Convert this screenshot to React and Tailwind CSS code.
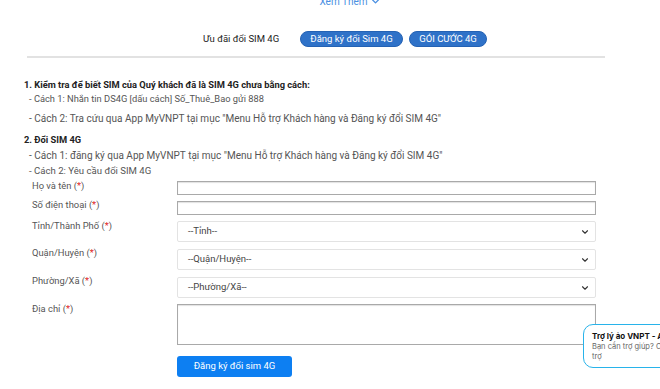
import { ChevronDown } from 'lucide-react'

const Req = () => <span>(<span className="text-[#e02424]">*</span>)</span>

const Row = ({ label, children, className = '', labelClass = '' }) => (
  <div className={`flex items-start pl-[32px] ${className}`}>
    <div className={`w-[145px] text-[9.4px] leading-[14px] text-[#555] ${labelClass}`}>
      {label} <Req />
    </div>
    <div className="w-[419px]">{children}</div>
  </div>
)

const TextInput = () => (
  <div className="h-[14px] border border-[#a9a9a9] shadow-[inset_0_1px_1px_rgba(0,0,0,0.12)] bg-white" />
)

const Select = ({ placeholder }) => (
  <div className="h-[21px] flex items-center justify-between pl-[10px] pr-[5px] border border-[#e3e3e3] rounded-[2px] bg-white text-[9.5px] text-[#444]">
    <span>{placeholder}</span>
    <ChevronDown size={10} strokeWidth={2.6} className="text-[#333]" />
  </div>
)

export default function App() {
  return (
    <div className="relative w-[660px] h-[389px] overflow-hidden bg-white font-['Roboto',sans-serif] text-[#333]">
      <div className="flex justify-center h-[8px]">
        <div className="-mt-[5px] flex items-center gap-[2px] text-[10px] leading-[12px] text-[#4a90e2] pl-[40px]">
          Xem Thêm <ChevronDown size={11} strokeWidth={3} />
        </div>
      </div>

      <div className="mt-[23px] flex items-center pl-[203px] h-[16px]">
        <span className="text-[9.5px] text-[#222] w-[97px]">Ưu đãi đổi SIM 4G</span>
        <span className="h-[16px] w-[103px] flex items-center justify-center rounded-full bg-[#2f72c8] border border-[#2462b4] text-white text-[9.5px]">
          Đăng ký đổi Sim 4G
        </span>
        <span className="ml-[6px] h-[16px] w-[78px] flex items-center justify-center rounded-full bg-[#2f72c8] border border-[#2462b4] text-white text-[9.5px]">
          GÓI CƯỚC 4G
        </span>
      </div>

      <div className="mt-[9px] ml-[27px] w-[578px] h-[2px] bg-[#e2e2e2]" />

      <div className="pl-[24px] mt-[20px] text-[9.6px]">
        <div className="font-bold text-[9.3px] leading-[14px] text-[#222]">
          1. Kiểm tra để biết SIM của Quý khách đã là SIM 4G chưa bằng cách:
        </div>
        <div className="pl-[5px] text-[9.3px] leading-[14px] text-[#555]">- Cách 1: Nhắn tin DS4G [dấu cách] Số_Thuê_Bao gửi 888</div>
        <div className="pl-[5px] mt-[6px] text-[10px] leading-[14px] text-[#555]">
          - Cách 2: Tra cứu qua App MyVNPT tại mục "Menu Hỗ trợ Khách hàng và Đăng ký đổi SIM 4G"
        </div>
        <div className="mt-[7px] font-bold text-[9.3px] leading-[14px] text-[#222]">2. Đổi SIM 4G</div>
        <div className="pl-[5px] mt-[1px] text-[10px] leading-[15px] text-[#555]">
          - Cách 1: đăng ký qua App MyVNPT tại mục "Menu Hỗ trợ Khách hàng và Đăng ký đổi SIM 4G"
        </div>
        <div className="pl-[5px] leading-[15px] text-[#555]">- Cách 2: Yêu cầu đổi SIM 4G</div>
      </div>

      <Row label="Họ và tên" className="mt-[3px]" labelClass="-mt-[2px]">
        <TextInput />
      </Row>
      <Row label="Số điện thoại" className="mt-[6px]" labelClass="-mt-[3px]">
        <TextInput />
      </Row>
      <Row label="Tỉnh/Thành Phố" className="mt-[6px]" labelClass="-mt-[2px]">
        <Select placeholder="--Tỉnh--" />
      </Row>
      <Row label="Quận/Huyện" className="mt-[7px]" labelClass="-mt-[3px]">
        <Select placeholder="--Quận/Huyện--" />
      </Row>
      <Row label="Phường/Xã" className="mt-[7px]" labelClass="-mt-[3px]">
        <Select placeholder="--Phường/Xã--" />
      </Row>
      <Row label="Địa chỉ" className="mt-[6px]" labelClass="-mt-[2px]">
        <div className="h-[41px] border border-[#a9a9a9] shadow-[inset_0_1px_1px_rgba(0,0,0,0.12)] bg-white" />
      </Row>

      <div className="pl-[177px] mt-[7px]">
        <button className="h-[21px] w-[115px] rounded-[3px] bg-[#0d7ff2] text-white text-[9.5px]">
          Đăng ký đổi sim 4G
        </button>
      </div>

      <div className="absolute left-[583px] top-[324px] w-[140px] h-[44px] rounded-[10px] border-[1.5px] border-[#28b3ea] bg-white pl-[8px] pt-[6px] font-['Inter',sans-serif]">
        <div className="text-[8px] leading-[11px] font-bold text-[#111] whitespace-nowrap">Trợ lý ảo VNPT - AI</div>
        <div className="text-[7.5px] leading-[10px] text-[#666] whitespace-nowrap">Bạn cần trợ giúp? Chat ngay</div>
        <div className="text-[7.5px] leading-[10px] text-[#666]">trợ</div>
      </div>
    </div>
  )
}
